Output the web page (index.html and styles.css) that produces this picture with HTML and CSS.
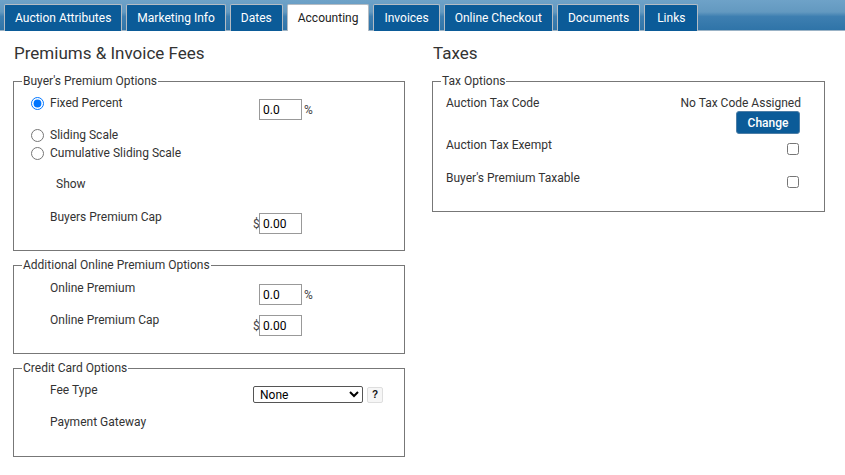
FILE: index.html
```html
<!DOCTYPE html>
<html lang="en">
<head>
<meta charset="utf-8">
<title>Accounting</title>
<link rel="stylesheet" href="styles.css">
</head>
<body>
<nav class="tabs">
  <a class="tab">Auction Attributes</a>
  <a class="tab">Marketing Info</a>
  <a class="tab">Dates</a>
  <a class="tab active">Accounting</a>
  <a class="tab">Invoices</a>
  <a class="tab">Online Checkout</a>
  <a class="tab">Documents</a>
  <a class="tab tab-links">Links</a>
</nav>
<main class="content">
  <section class="col">
    <h2 class="heading">Premiums &amp; Invoice Fees</h2>
    <fieldset class="box box-bp">
      <legend>Buyer's Premium Options</legend>
      <div class="row row-32">
        <label class="lbl"><input type="radio" name="bp" class="radio" checked>Fixed Percent</label>
        <div class="val"><input type="text" class="num pct" value="0.0"><span class="unit">%</span></div>
      </div>
      <div class="row row-18">
        <label class="lbl"><input type="radio" name="bp" class="radio">Sliding Scale</label>
      </div>
      <div class="row row-16">
        <label class="lbl"><input type="radio" name="bp" class="radio">Cumulative Sliding Scale</label>
      </div>
      <div class="row row-show">
        <span class="lbl show">Show</span>
      </div>
      <div class="row row-cap">
        <span class="lbl">Buyers Premium Cap</span>
        <div class="val"><span class="cur">$</span><input type="text" class="num" value="0.00"></div>
      </div>
    </fieldset>

    <fieldset class="box box-op">
      <legend>Additional Online Premium Options</legend>
      <div class="row row-32">
        <span class="lbl">Online Premium</span>
        <div class="val"><input type="text" class="num pct" value="0.0"><span class="unit">%</span></div>
      </div>
      <div class="row row-cap2">
        <span class="lbl">Online Premium Cap</span>
        <div class="val val-3"><span class="cur">$</span><input type="text" class="num" value="0.00"></div>
      </div>
    </fieldset>

    <fieldset class="box box-cc">
      <legend>Credit Card Options</legend>
      <div class="row row-32">
        <span class="lbl">Fee Type</span>
        <div class="val">
          <select class="sel"><option>None</option></select>
          <button type="button" class="help">?</button>
        </div>
      </div>
      <div class="row">
        <span class="lbl">Payment Gateway</span>
      </div>
    </fieldset>
  </section>

  <section class="col">
    <h2 class="heading">Taxes</h2>
    <fieldset class="box box-tax">
      <legend>Tax Options</legend>
      <div class="trow trow-code">
        <span class="lbl">Auction Tax Code</span>
        <div class="code">
          <span>No Tax Code Assigned</span>
          <button type="button" class="btn">Change</button>
        </div>
      </div>
      <div class="trow trow-exempt">
        <span class="lbl">Auction Tax Exempt</span>
        <input type="checkbox" class="chk">
      </div>
      <div class="trow">
        <span class="lbl">Buyer's Premium Taxable</span>
        <input type="checkbox" class="chk">
      </div>
    </fieldset>
  </section>
</main>
</body>
</html>
```

FILE: styles.css
```css
* { box-sizing: border-box; }

body {
  margin: 0;
  font-family: Roboto, "Liberation Sans", Arial, sans-serif;
  font-size: 12px;
  color: #333;
  background: #fff;
}

.tabs {
  display: flex;
  align-items: flex-end;
  gap: 4px;
  height: 31px;
  padding-left: 4px;
  background: linear-gradient(to bottom, #6ea2c8 0%, #6399c0 40%, #3e7fb1 55%, #2f74a8 100%);
  border-bottom: 1px solid #9bb3c6;
}

.tab {
  display: block;
  height: 27px;
  margin-bottom: -1px;
  padding: 0 10px;
  line-height: 26px;
  color: #fff;
  background: #0b5b98;
  border: 1px solid #b4bcc4;
  border-bottom: none;
  border-radius: 2px 2px 0 0;
  white-space: nowrap;
}

.tab.active {
  color: #222;
  background: #fff;
}

.tab-links { padding: 0 12px; }

.content {
  display: grid;
  grid-template-columns: 392px 393px;
  column-gap: 27px;
  padding-left: 13px;
}

.heading {
  margin: 12px 0 11px 1px;
  font-size: 17px;
  line-height: 20px;
  font-weight: normal;
  color: #333;
}

.box {
  margin: 0 0 7px 0;
  padding: 7px 0 0 36px;
  border: 1px solid #777;
  min-width: 0;
}

.box legend {
  margin-left: -28px;
  padding: 0 1px;
  line-height: 14px;
  font-size: 12px;
  color: #333;
}

.box-bp { padding-bottom: 16px; }
.box-op { padding-top: 8px; padding-bottom: 17px; }
.box-cc { padding-bottom: 26px; }

.row {
  display: grid;
  grid-template-columns: 203px auto;
  align-items: start;
  line-height: 16px;
}

.row-32 { height: 32px; }
.row-18 { height: 18px; }
.row-16 { height: 16px; }
.row-show { margin-top: 15px; height: 16px; }
.row-cap { margin-top: 17px; height: 25px; }
.row-cap2 { height: 24px; }

.lbl {
  display: flex;
  align-items: center;
}

.show { padding-left: 6px; }

.radio {
  width: 13px;
  height: 13px;
  margin: 0 6px 0 -19px;
}

.val {
  display: flex;
  align-items: center;
  margin-top: 4px;
}

.val-3 { margin-top: 3px; }

.num {
  width: 43px;
  height: 21px;
  padding: 0 3px;
  border: 1px solid #999;
  border-radius: 0;
  font-family: Roboto, "Liberation Sans", Arial, sans-serif;
  font-size: 12px;
  color: #000;
}

.pct { margin-left: 6px; }

.unit {
  margin-left: 2px;
  font-size: 12px;
  line-height: 14px;
  color: #444;
}

.cur {
  width: 6px;
  color: #444;
  font-size: 12px;
  line-height: 14px;
}

.sel {
  width: 110px;
  height: 17px;
  padding: 0 0 0 2px;
  border: 1px solid #555;
  border-radius: 2px;
  font-family: Roboto, "Liberation Sans", Arial, sans-serif;
  font-size: 12px;
  color: #000;
  background: #fff;
}

.help {
  width: 16px;
  height: 16px;
  margin-left: 4px;
  padding: 0;
  border: 1px solid #dedede;
  border-radius: 2px;
  background: #f6f6f6;
  font-family: "Liberation Sans", Arial, sans-serif;
  font-size: 10px;
  font-weight: bold;
  line-height: 14px;
  color: #111;
}

.box-tax {
  padding: 7px 23px 0 13px;
  height: 138px;
}

.box-tax legend { margin-left: -5px; }

.trow {
  display: flex;
  justify-content: space-between;
  align-items: flex-start;
  line-height: 16px;
}

.trow-code { height: 42px; }
.trow-exempt { height: 33px; }

.code {
  display: flex;
  flex-direction: column;
  align-items: flex-end;
}

.btn {
  width: 64px;
  height: 23px;
  margin-right: 1px;
  padding: 0;
  border: 1px solid #4d7ea6;
  border-radius: 3px;
  background: #0b5b98;
  color: #fff;
  font-family: Roboto, "Liberation Sans", Arial, sans-serif;
  font-size: 12px;
  font-weight: 500;
}

.chk {
  width: 12px;
  height: 12px;
  margin: 6px 2px 0 0;
}
```
